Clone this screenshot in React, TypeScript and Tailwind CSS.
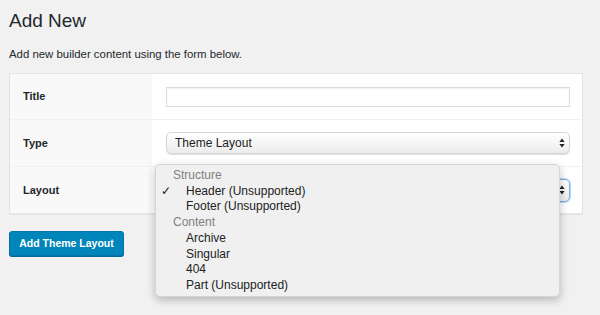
import React from 'react';

const font = { fontFamily: '"Liberation Sans", Arial, sans-serif' };

function UpDown() {
  return (
    <svg width="6" height="10" viewBox="0 0 6 10" className="shrink-0">
      <path d="M3 0.5 L5.6 4 L0.4 4 Z" fill="#222" />
      <path d="M3 9.5 L5.6 6 L0.4 6 Z" fill="#222" />
    </svg>
  );
}

const groups = [
  { label: 'Structure', items: ['Header (Unsupported)', 'Footer (Unsupported)'] },
  { label: 'Content', items: ['Archive', 'Singular', '404', 'Part (Unsupported)'] },
];

export default function App() {
  return (
    <div className="w-[600px] h-[315px] bg-[#f1f1f1] text-[#23282d] overflow-hidden pl-[9px] pt-[9px]" style={font}>
      <h1 className="text-[19px] leading-[24px] font-normal">Add New</h1>
      <p className="text-[11.4px] leading-[14px] mt-[14px]">Add new builder content using the form below.</p>

      <div className="relative mt-[12px] w-[574px] bg-white border border-[#e5e5e5] shadow-[0_1px_1px_rgba(0,0,0,0.04)]">
        <div className="flex h-[45px]">
          <div className="w-[142px] bg-[#f9f9f9] flex items-center pl-[13px] text-[11px] font-bold">Title</div>
          <div className="flex-1 flex items-center pl-[14px]">
            <div className="w-[404px] h-[20px] bg-white border border-[#dcdcdc] shadow-[inset_0_1px_2px_rgba(0,0,0,0.07)]" />
          </div>
        </div>
        <div className="flex h-[47px] border-t border-[#f1f1f1]">
          <div className="w-[142px] bg-[#f9f9f9] flex items-center pl-[13px] text-[11px] font-bold">Type</div>
          <div className="flex-1 flex items-center pl-[14px]">
            <div className="w-[404px] h-[22px] rounded-[5px] border border-[#d4d4d4] bg-gradient-to-b from-white to-[#ececec] shadow-[0_1px_1px_rgba(0,0,0,0.12)] flex items-center justify-between pl-[8px] pr-[4px] text-[12px] text-[#222]">
              <span>Theme Layout</span>
              <UpDown />
            </div>
          </div>
        </div>
        <div className="flex h-[47px] border-t border-[#f1f1f1]">
          <div className="w-[142px] bg-[#f9f9f9] flex items-center pl-[13px] text-[11px] font-bold">Layout</div>
          <div className="flex-1 flex items-center pl-[14px]">
            <div className="w-[404px] h-[23px] rounded-[5px] border border-[#7fb0e6] bg-gradient-to-b from-white to-[#ececec] shadow-[0_0_0_1px_rgba(91,157,217,0.4)] flex items-center justify-end pr-[4px]">
              <UpDown />
            </div>
          </div>
        </div>

        <div className="absolute left-[145px] top-[90px] w-[405px] h-[133px] rounded-[5px] bg-[#f0f0f0] border border-[#d6d6d6] shadow-[0_3px_8px_rgba(0,0,0,0.25)] pt-[3px] text-[12px] leading-[15.7px] text-[#222]">
          {groups.map((g) => (
            <div key={g.label}>
              <div className="pl-[17px] text-[#808080]">{g.label}</div>
              {g.items.map((it, i) => (
                <div key={it} className="relative pl-[30px]">
                  {g.label === 'Structure' && i === 0 && (
                    <span className="absolute left-[5px] top-0">✓</span>
                  )}
                  {it}
                </div>
              ))}
            </div>
          ))}
        </div>
      </div>

      <button className="mt-[17px] h-[25px] w-[115px] rounded-[3px] bg-[#0085ba] border border-[#0073aa] shadow-[0_1px_0_#006799] text-white text-[10.5px] font-bold">
        Add Theme Layout
      </button>
    </div>
  );
}
